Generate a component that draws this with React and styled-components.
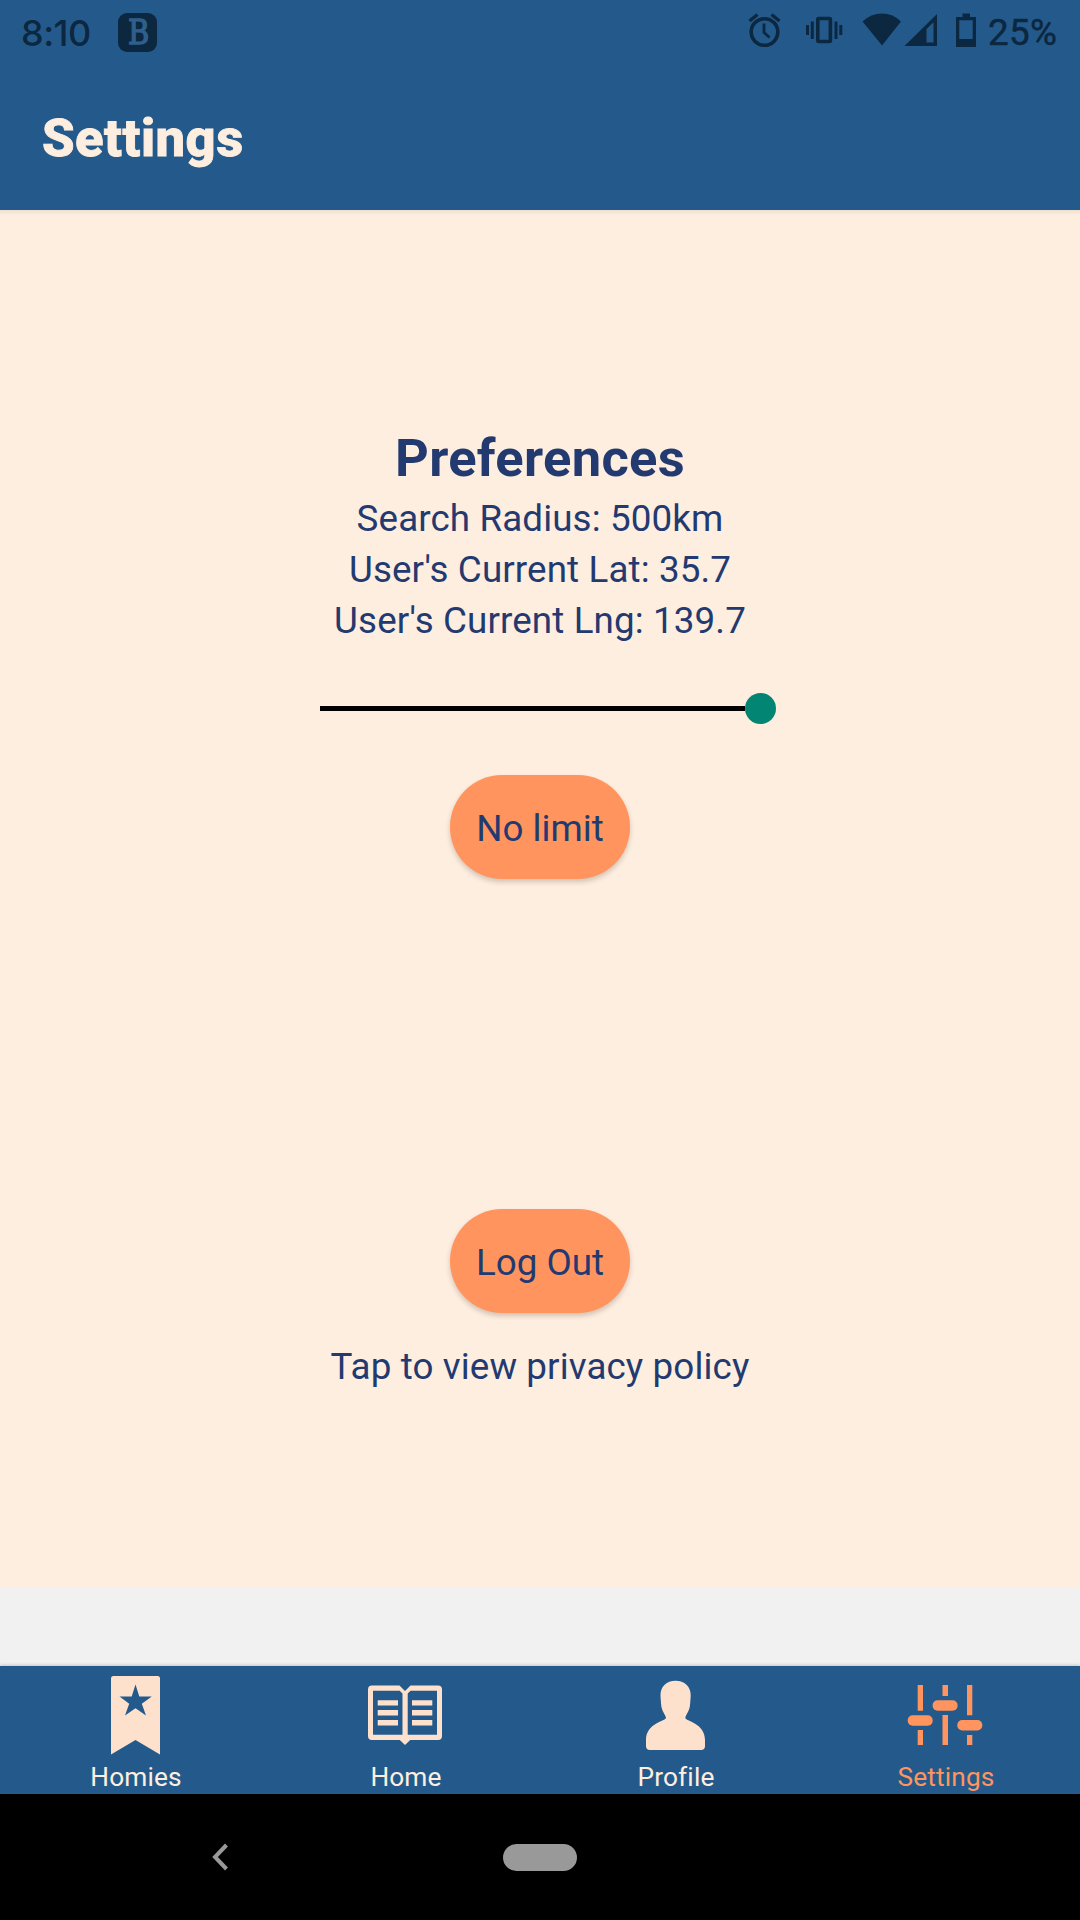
import React from "react";
import styled, { createGlobalStyle } from "styled-components";

const color = {
  blue: "#245a8b",
  cream: "#feeee0",
  icon: "#fee1cd",
  orange: "#ff945e",
  navy: "#233a70",
  status: "#0c2740",
};

const GlobalStyle = createGlobalStyle`
  *, *::before, *::after { box-sizing: border-box; }
  body { margin: 0; background: #000; }
`;

const Screen = styled.div`
  width: 1080px;
  height: 1920px;
  display: flex;
  flex-direction: column;
  overflow: hidden;
  background: #f1f1f1;
  color: ${color.navy};
  font-family: Roboto, "Noto Sans", sans-serif;
  font-size: 36.75px;
`;

const StatusBar = styled.div`
  height: 64px;
  flex: none;
  display: flex;
  align-items: center;
  padding: 0 21px;
  background: ${color.blue};
  color: ${color.status};
`;

const Clock = styled.span`
  width: 70px;
  padding-top: 2px;
  font-family: Inter, sans-serif;
  font-size: 36px;
  font-weight: 500;
  line-height: 64px;
  letter-spacing: -0.5px;
  white-space: nowrap;
`;

const BatteryLevel = styled.span`
  width: 71px;
  padding-top: 2px;
  font-size: 36.75px;
  font-weight: 400;
  line-height: 64px;
  letter-spacing: 0.4px;
  -webkit-text-stroke: 0.5px currentColor;
  white-space: nowrap;
`;

const Badge = styled.span`
  width: 39px;
  height: 39px;
  margin-left: 27px;
  padding-left: 2px;
  border-radius: 9px;
  display: flex;
  align-items: center;
  justify-content: center;
  background: ${color.status};
  color: #2f608c;
`;

const BadgeLetter = styled.span`
  font-family: "DejaVu Serif", serif;
  font-size: 34px;
  font-weight: 400;
  line-height: 39px;
  -webkit-text-stroke: 1.4px currentColor;
  transform: scaleX(0.85);
`;

const Tray = styled.div`
  display: flex;
  margin-left: auto;
`;

const StatusIcon = styled.svg`
  display: block;
  flex: none;
  height: 64px;
  width: ${(p) => p.$width}px;
  margin-right: ${(p) => p.$gap}px;
`;

const Header = styled.header`
  height: 146px;
  flex: none;
  display: flex;
  align-items: center;
  padding: 2px 42px 0;
  background: ${color.blue};
  color: ${color.cream};
`;

const Title = styled.h1`
  margin: 0;
  font-size: 52.5px;
  font-weight: 800;
  letter-spacing: 0.5px;
  -webkit-text-stroke: 0.9px currentColor;
`;

const Content = styled.main`
  height: 1378px;
  flex: none;
  display: flex;
  flex-direction: column;
  align-items: center;
  padding-top: 213px;
  background: linear-gradient(#eedfce, ${color.cream} 5px);
`;

const Heading = styled.h2`
  margin: 0;
  font-size: 52.5px;
  font-weight: 700;
  line-height: 70px;
  letter-spacing: 0.3px;
`;

const Line = styled.p`
  margin: 0;
  line-height: 51px;
  letter-spacing: 0.12px;
`;

const Slider = styled.div`
  width: 456px;
  height: 31px;
  margin: 47px 0 51px 16px;
  display: flex;
  align-items: center;
`;

const Track = styled.div`
  flex: 1;
  height: 5px;
  background: #000;
`;

const Thumb = styled.div`
  width: 31px;
  height: 31px;
  border-radius: 50%;
  background: #028673;
`;

const Button = styled.button`
  width: 180px;
  height: 104px;
  margin: 0 0 ${(p) => p.$below}px;
  padding: 3px 0 0;
  border: 0;
  border-radius: 52px;
  background: ${color.orange};
  color: ${color.navy};
  font: inherit;
  white-space: nowrap;
  box-shadow: 0 3px 5px rgba(60, 40, 20, 0.22);
`;

const TabBar = styled.nav`
  height: 128px;
  margin-top: 78px;
  flex: none;
  display: flex;
  background: ${color.blue};
  box-shadow: 0 -1px 3px rgba(0, 0, 0, 0.18);
`;

const Tab = styled.div`
  flex: 1;
  display: flex;
  flex-direction: column;
  align-items: center;
  color: ${(p) => (p.$active ? color.orange : color.icon)};
`;

const TabIcon = styled.svg`
  display: block;
  flex: none;
  width: 80px;
  height: 92px;
  fill: currentColor;
`;

const TabLabel = styled.span`
  padding-left: 2px;
  font-size: 26.25px;
  line-height: 38px;
  letter-spacing: 0.15px;
  color: ${(p) => (p.$active ? color.orange : color.cream)};
`;

const SystemNav = styled.div`
  height: 126px;
  flex: none;
  display: grid;
  grid-template-columns: 212px 1fr 212px;
  justify-items: end;
  align-items: center;
  background: #000;
`;

const BackIcon = styled.svg`
  display: block;
  width: 16px;
  height: 28px;
  margin-right: -16px;
  fill: none;
  stroke: #999;
  stroke-width: 4;
`;

const HomePill = styled.div`
  width: 74px;
  height: 27px;
  justify-self: center;
  border-radius: 14px;
  background: #999;
`;

const tabs = [
  {
    label: "Homies",
    icon: (
      <path
        fillRule="evenodd"
        d="M18.5 10H62.5Q65 10 65 12.5V88.5L40.5 74L16 88.5V12.5Q16 10 18.5 10ZM40.5 18.5L36.7 30.4H24.5L34.2 37.8L30 49.5L40.5 42.3L51 49.5L46.8 37.8L56.8 30.4H44.3Z"
      />
    ),
  },
  {
    label: "Home",
    icon: (
      <path
        fillRule="evenodd"
        d="M7 19.5H34.5L40 25L45.5 19.5H73Q77 19.5 77 23.5V70Q77 74 73 74H45.2L40 79L34.8 74H7Q3 74 3 70V23.5Q3 19.5 7 19.5ZM8 24.7V68.7H37.5V27.5L34.7 24.7ZM72 24.7H45.5L42.7 27.5V68.7H72ZM12.7 34.2H33V39.6H12.7ZM12.7 44.1H33V49.5H12.7ZM12.7 54H33V59.4H12.7ZM47 34.2H67.3V39.6H47ZM47 44.1H67.3V49.5H47ZM47 54H67.3V59.4H47Z"
      />
    ),
  },
  {
    label: "Profile",
    icon: (
      <path d="M40.6 14.7C49.6 14.7 55.7 20.5 55.7 29C55.7 31 55.3 36 54.9 40C54.4 45 50.6 49 50.3 52C50.3 55 70 57 70 74V80Q70 84 66 84H15Q11 84 11 80V74C11 57 31 55 31 52C30.6 49 26.8 45 26.3 40C25.9 36 25.5 31 25.5 29C25.5 20.5 31.6 14.7 40.6 14.7Z" />
    ),
  },
  {
    label: "Settings",
    active: true,
    icon: (
      <>
        <path d="M12.7 19H18V44.7H12.7ZM12.7 64H18V79H12.7ZM37.5 19H43V30H37.5ZM37.5 49H43V79H37.5ZM62 19H67.3V49.3H62ZM62 69H67.3V79H62Z" />
        <rect x="2.7" y="49.3" width="25" height="10.4" rx="5" />
        <rect x="27.6" y="34.3" width="25" height="10.4" rx="5" />
        <rect x="52.3" y="54" width="25" height="10.4" rx="5" />
      </>
    ),
  },
];

function StatusTray() {
  return (
    <Tray>
      <StatusIcon $width={38} $gap={21} viewBox="746 0 38 64" fill="none" stroke={color.status}>
        <circle cx="764.5" cy="33" r="13.3" strokeWidth="3.6" />
        <path d="M749.5 22L757.5 15.5M779.5 22L771.5 15.5" strokeWidth="3.4" />
        <path d="M764 24.5V33.5L769.5 38.5" strokeWidth="2.8" />
      </StatusIcon>
      <StatusIcon $width={38} $gap={18} viewBox="805 0 38 64" fill="none" stroke={color.status}>
        <rect x="817.8" y="19.5" width="12.6" height="23" rx="1" strokeWidth="3.6" />
        <path d="M807.5 26V36M812.3 22.5V40M836 22.5V40M840.8 26V36" strokeWidth="3" />
      </StatusIcon>
      <StatusIcon $width={40} $gap={3} viewBox="861 0 40 64" fill={color.status}>
        <path d="M882 46.5L862.5 22.5Q871 14.5 882 14.5T901 22.5Z" />
      </StatusIcon>
      <StatusIcon $width={34} $gap={16} viewBox="904 0 34 64" fill={color.status}>
        <path fillRule="evenodd" d="M904.5 47L937 15V47ZM926.5 30V43.5H933.5V23.3Z" />
      </StatusIcon>
      <StatusIcon $width={24} $gap={10} viewBox="954 0 24 64" fill={color.status}>
        <path fillRule="evenodd" d="M956 18H962.5V14.5H970V18H976V48H956ZM959.3 21.3V40H972.7V21.3Z" />
      </StatusIcon>
      <BatteryLevel>25%</BatteryLevel>
    </Tray>
  );
}

export default function App() {
  return (
    <Screen>
      <GlobalStyle />
      <StatusBar>
        <Clock>8:10</Clock>
        <Badge>
          <BadgeLetter>B</BadgeLetter>
        </Badge>
        <StatusTray />
      </StatusBar>
      <Header>
        <Title>Settings</Title>
      </Header>
      <Content>
        <Heading>Preferences</Heading>
        <Line>Search Radius: 500km</Line>
        <Line>User's Current Lat: 35.7</Line>
        <Line>User's Current Lng: 139.7</Line>
        <Slider>
          <Track />
          <Thumb />
        </Slider>
        <Button $below={330}>No limit</Button>
        <Button $below={28}>Log Out</Button>
        <Line>Tap to view privacy policy</Line>
      </Content>
      <TabBar>
        {tabs.map((tab) => (
          <Tab key={tab.label} $active={tab.active}>
            <TabIcon viewBox="0 0 80 92">{tab.icon}</TabIcon>
            <TabLabel $active={tab.active}>{tab.label}</TabLabel>
          </Tab>
        ))}
      </TabBar>
      <SystemNav>
        <BackIcon viewBox="0 0 16 28">
          <path d="M14.5 2L3 14L14.5 26" />
        </BackIcon>
        <HomePill />
      </SystemNav>
    </Screen>
  );
}
